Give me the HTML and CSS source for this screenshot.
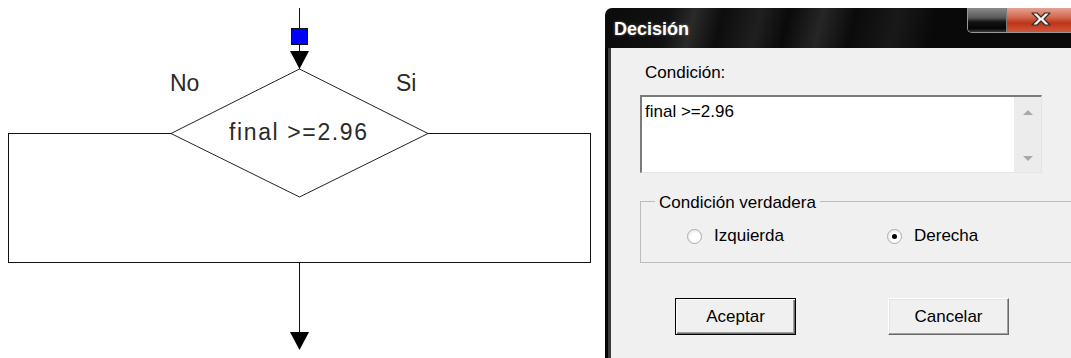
FILE: index.html
```html
<!DOCTYPE html>
<html>

<head>
    <meta charset="UTF-8">
    <title>Decisión</title>
    <link rel="stylesheet" href="styles.css">
</head>

<body>
    <div class="page">
        <svg class="chart" width="605" height="358" viewBox="0 0 605 358">
            <g class="wires">
                <line x1="299.5" y1="8" x2="299.5" y2="69" />
                <polyline points="171,133.5 8.5,133.5 8.5,262.5 590.5,262.5 590.5,133.5 428,133.5" />
                <line x1="299.5" y1="262" x2="299.5" y2="334" />
            </g>
            <polygon class="diamond" points="299.5,69 428,133.5 299.5,197 171,133.5" />
            <rect class="handle" x="291.5" y="28.5" width="16" height="16" />
            <polygon class="head" points="290,51 309,51 299.5,69" />
            <polygon class="head" points="290,332 309,332 299.5,350" />
            <text class="label" x="170" y="91">No</text>
            <text class="label" x="396" y="91">Si</text>
            <text class="label" x="229" y="140" textLength="138">final &gt;=2.96</text>
        </svg>

        <div class="dialog">
            <div class="titlebar">
                <span class="title">Decisión</span>
                <div class="caption-buttons">
                    <span class="btn-min"></span>
                    <span class="btn-close">
                        <svg width="22" height="14" viewBox="0 0 22 14">
                            <path d="M2 1h5l4 4 4-4h5l-6 6 6 6h-5l-4-4-4 4H2l6-6z" fill="#f4f4f4" stroke="#3a2a26" stroke-width="1.2" stroke-linejoin="round" />
                        </svg>
                    </span>
                </div>
            </div>
            <div class="frame">
                <div class="caption">Condición:</div>
                <div class="memo">
                    <div class="memo-text">final &gt;=2.96</div>
                    <div class="memo-scroll">
                        <span class="arrow-up"></span>
                        <span class="arrow-down"></span>
                    </div>
                </div>
                <fieldset class="group">
                    <legend>Condición verdadera</legend>
                    <div class="options">
                        <div class="option"><span class="radio"></span>Izquierda</div>
                        <div class="option"><span class="radio checked"></span>Derecha</div>
                    </div>
                </fieldset>
                <div class="buttons">
                    <button class="button default">Aceptar</button>
                    <button class="button">Cancelar</button>
                </div>
            </div>
        </div>
    </div>
</body>

</html>
```

FILE: styles.css
```css
* {
    font-family: "Liberation Sans", Arial, sans-serif;
}

html,
body {
    margin: 0;
    background-color: #fff;
    overflow: hidden;
}

.page {
    display: flex;
    height: 358px;
}

/* flowchart */

.chart {
    display: block;
    flex: none;
}

.wires line,
.wires polyline {
    fill: none;
    stroke: #111;
    stroke-width: 1;
    shape-rendering: crispEdges;
}

.diamond {
    fill: none;
    stroke: #222;
    stroke-width: 1;
}

.handle {
    fill: #0000ff;
    stroke: #111;
    stroke-width: 1;
    shape-rendering: crispEdges;
}

.head {
    fill: #000;
}

.label {
    font-size: 23px;
    fill: #2a2a2a;
}

/* dialog */

.dialog {
    flex: 1;
    min-width: 0;
    margin-top: 8px;
    display: flex;
    flex-direction: column;
}

.titlebar {
    height: 40px;
    display: flex;
    justify-content: space-between;
    align-items: flex-start;
    border-radius: 7px 0 0 0;
    background: linear-gradient(104deg, #0b0b0b 0, #111 14%, #2a2a2a 19%, #0d0d0d 25%, #1f1f1f 33%, #0a0a0a 39%, #262626 46%, #0b0b0b 53%, #191919 62%, #090909 70%, #0a0a0a 100%);
}

.title {
    color: #fff;
    font-size: 18px;
    font-weight: bold;
    line-height: 20px;
    padding: 11px 0 0 9px;
    text-shadow: 0 0 3px rgba(255, 255, 255, .35);
}

.caption-buttons {
    display: flex;
    width: 104px;
    height: 25px;
    border-left: 1px solid #9a9a9a;
    border-bottom: 1px solid #9a9a9a;
    border-radius: 0 0 0 5px;
    overflow: hidden;
    box-sizing: border-box;
}

.btn-min {
    width: 38px;
    background: linear-gradient(#8a8a8a, #5a5a5a 40%, #141414 58%, #050505 85%, #3a3a3a);
    border-right: 1px solid #7a7a7a;
}

.btn-close {
    flex: 1;
    display: flex;
    align-items: flex-start;
    padding: 4px 0 0 23px;
    background: linear-gradient(#e3a394, #d2664d 40%, #bd3518 62%, #d0573a);
}

.frame {
    flex: 1;
    background-color: #f0f0f0;
    border-left: 3px solid #050505;
    box-shadow: inset 3px 0 #3c3c3c;
    padding: 15px 0 0 32px;
}

.caption {
    font-size: 17px;
    line-height: 20px;
    margin-left: 5px;
}

.memo {
    display: flex;
    width: 402px;
    height: 78px;
    margin-top: 12px;
    box-sizing: border-box;
    background-color: #fff;
    border-style: solid;
    border-width: 2px 1px 1px 2px;
    border-color: #7a7a7a #e4e4e4 #e4e4e4 #7a7a7a;
}

.memo-text {
    flex: 1;
    font-size: 17px;
    line-height: 20px;
    padding: 5px 0 0 3px;
}

.memo-scroll {
    width: 27px;
    display: flex;
    flex-direction: column;
    justify-content: space-between;
    align-items: center;
    padding: 13px 0 11px;
    background-color: #ececec;
}

.arrow-up,
.arrow-down {
    width: 0;
    height: 0;
    border-left: 5px solid transparent;
    border-right: 5px solid transparent;
}

.arrow-up {
    border-bottom: 5px solid #a9a9a9;
}

.arrow-down {
    border-top: 5px solid #a9a9a9;
}

.group {
    width: 407px;
    margin: 16px 0 0 0;
    padding: 13px 0 16px 0;
    box-sizing: border-box;
    border: 1px solid #bcbcbc;
}

.group legend {
    font-size: 17px;
    line-height: 20px;
    padding: 4px 4px 0;
    margin-left: 14px;
}

.options {
    display: flex;
    padding-left: 46px;
}

.option {
    display: flex;
    align-items: center;
    gap: 12px;
    width: 200px;
    font-size: 17px;
    line-height: 20px;
}

.radio {
    width: 15px;
    height: 15px;
    box-sizing: border-box;
    border-radius: 50%;
    border: 1px solid #adadad;
    background: radial-gradient(circle at 60% 60%, #fff 40%, #dedede);
    display: flex;
    align-items: center;
    justify-content: center;
}

.radio.checked::after {
    content: "";
    width: 5px;
    height: 5px;
    border-radius: 50%;
    background-color: #000;
}

.buttons {
    display: flex;
    gap: 92px;
    margin: 35px 0 0 35px;
}

.button {
    width: 121px;
    height: 37px;
    padding: 0;
    font-size: 17px;
    color: #000;
    background-color: #f0f0f0;
    border: 1px solid;
    border-color: #fff #696969 #696969 #fff;
    box-shadow: inset -1px -1px #a0a0a0, inset 1px 1px #e3e3e3;
}

.button.default {
    border-color: #000;
    box-shadow: inset 1px 1px #fff, inset -1px -1px #696969, inset -2px -2px #a0a0a0;
}
```
